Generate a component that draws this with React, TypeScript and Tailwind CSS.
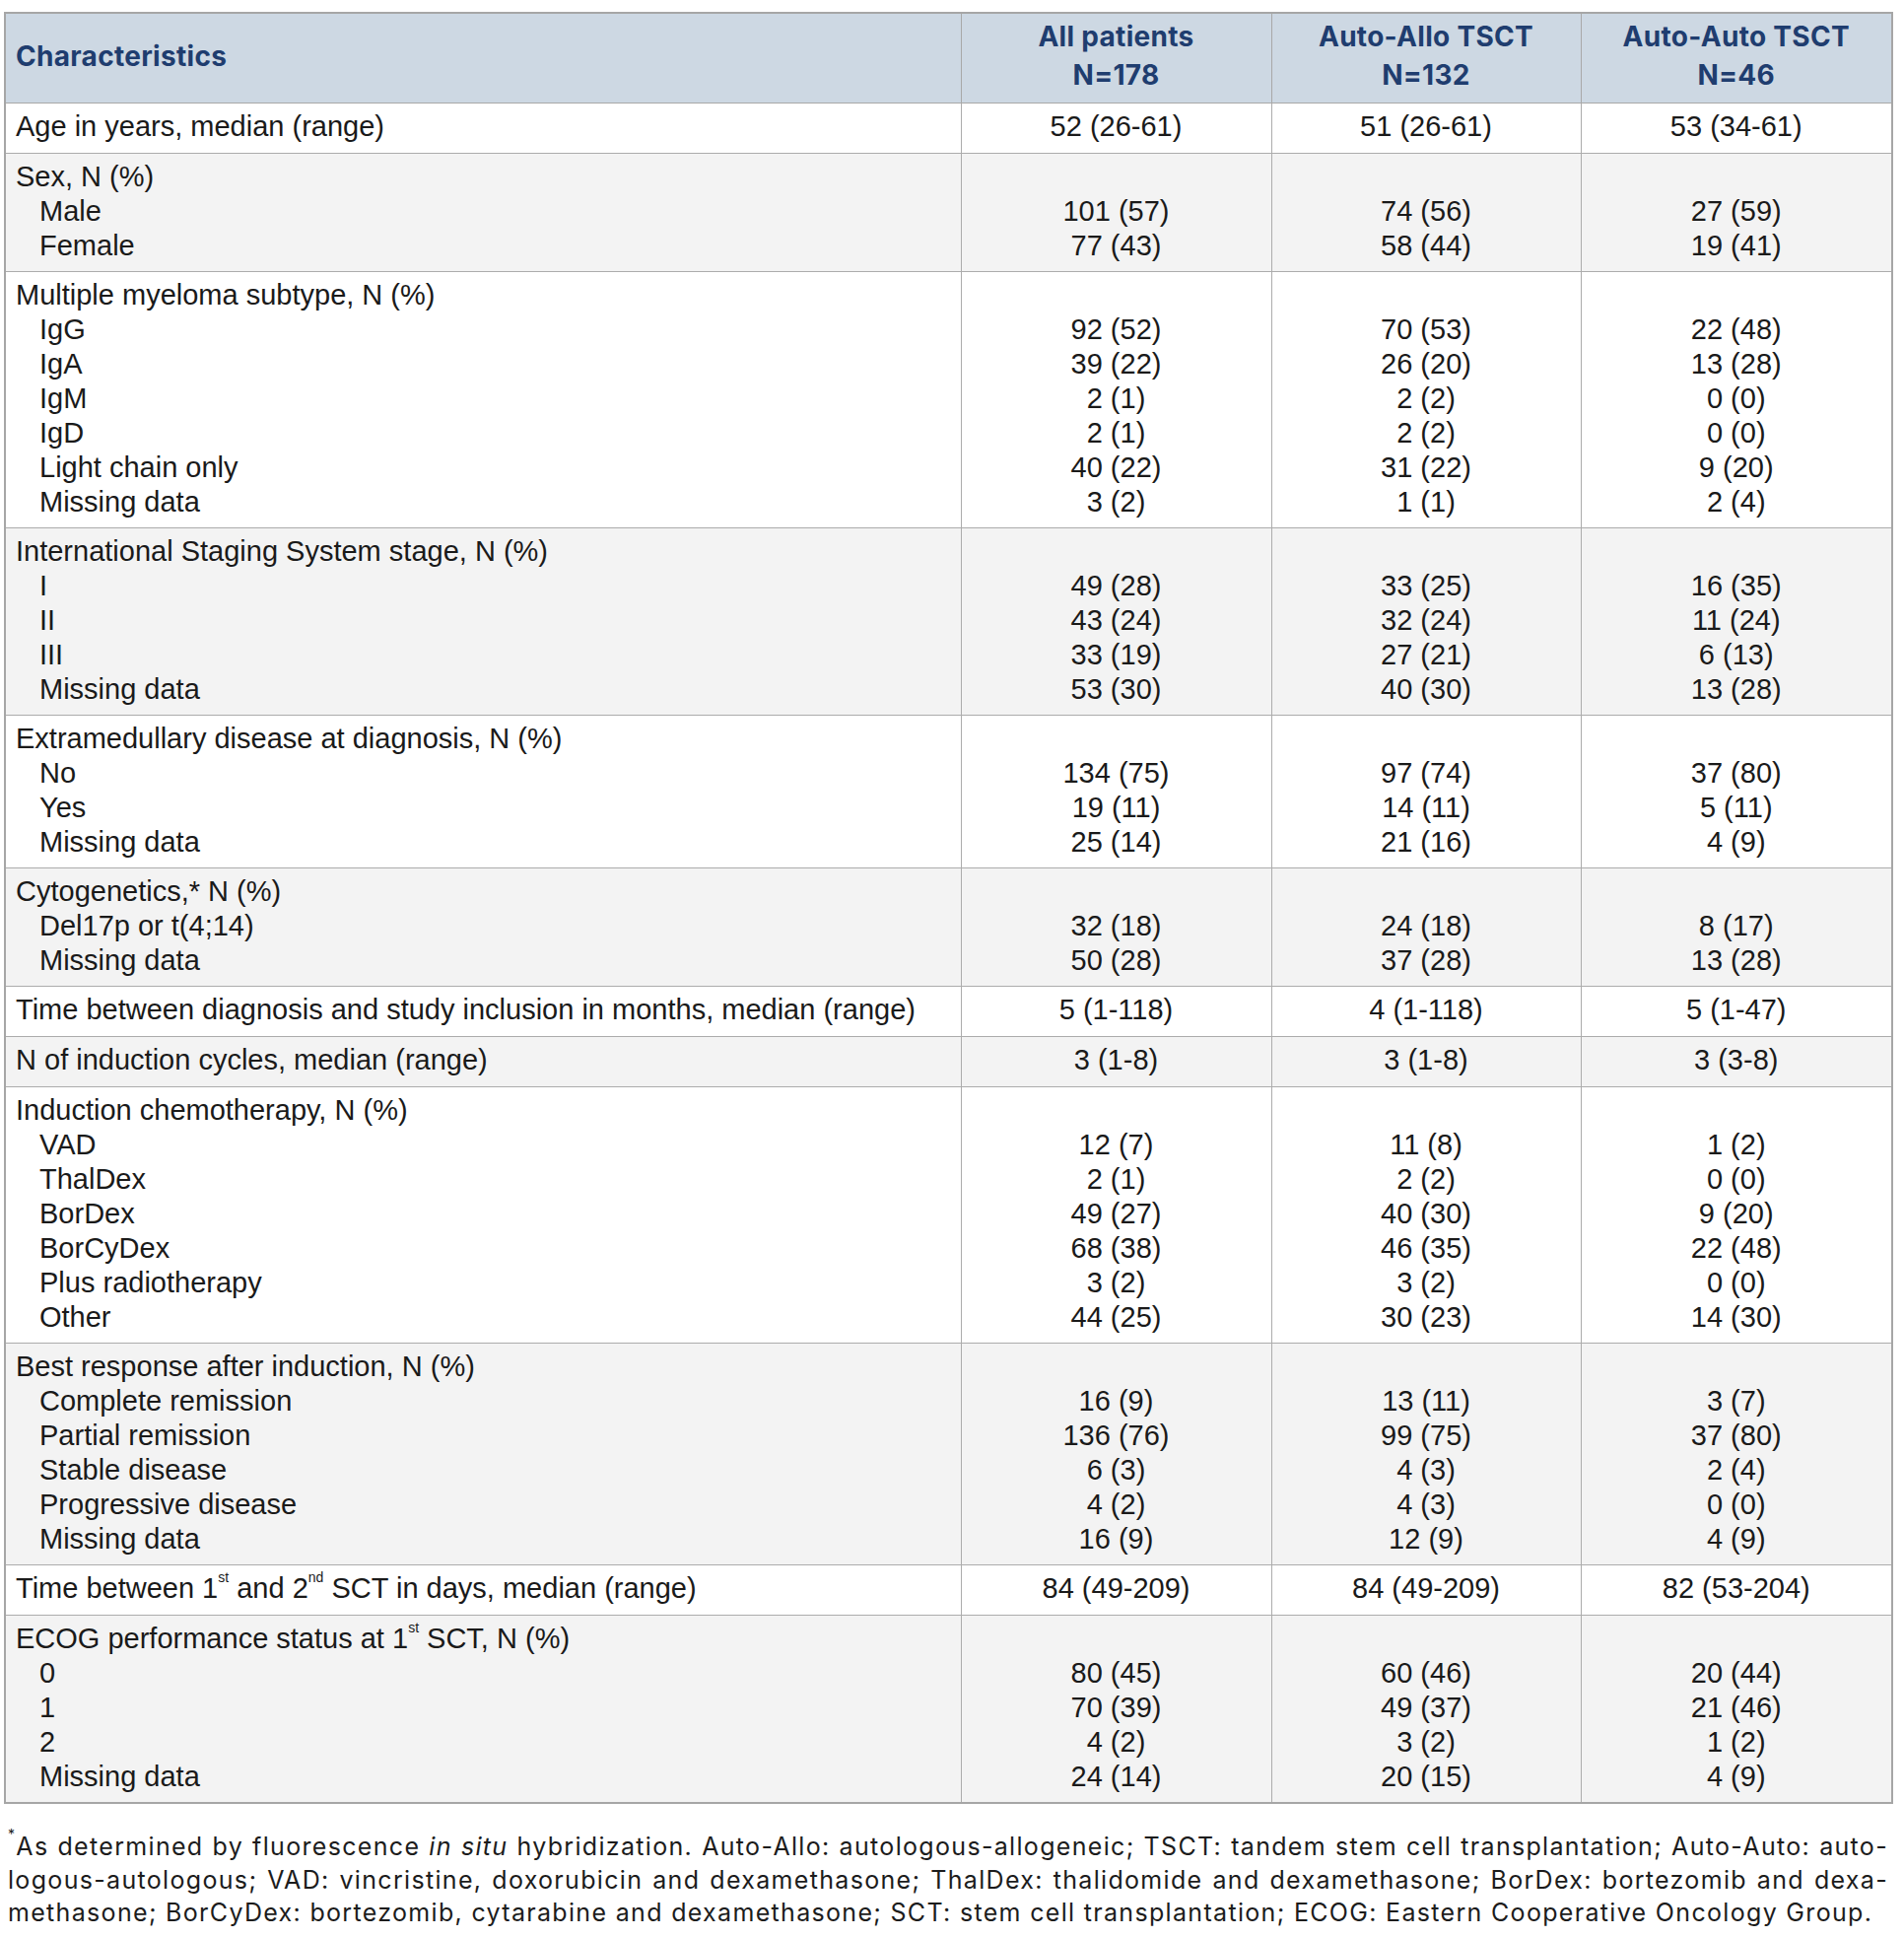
import React from "react";

type Item = [string, string, string, string];
type Row = { label: React.ReactNode; vals?: [string, string, string]; items?: Item[] };

const sup = "text-[14px] align-[9px]";

const rows: Row[] = [
  { label: "Age in years, median (range)", vals: ["52 (26-61)", "51 (26-61)", "53 (34-61)"] },
  {
    label: "Sex, N (%)",
    items: [
      ["Male", "101 (57)", "74 (56)", "27 (59)"],
      ["Female", "77 (43)", "58 (44)", "19 (41)"],
    ],
  },
  {
    label: "Multiple myeloma subtype, N (%)",
    items: [
      ["IgG", "92 (52)", "70 (53)", "22 (48)"],
      ["IgA", "39 (22)", "26 (20)", "13 (28)"],
      ["IgM", "2 (1)", "2 (2)", "0 (0)"],
      ["IgD", "2 (1)", "2 (2)", "0 (0)"],
      ["Light chain only", "40 (22)", "31 (22)", "9 (20)"],
      ["Missing data", "3 (2)", "1 (1)", "2 (4)"],
    ],
  },
  {
    label: "International Staging System stage, N (%)",
    items: [
      ["I", "49 (28)", "33 (25)", "16 (35)"],
      ["II", "43 (24)", "32 (24)", "11 (24)"],
      ["III", "33 (19)", "27 (21)", "6 (13)"],
      ["Missing data", "53 (30)", "40 (30)", "13 (28)"],
    ],
  },
  {
    label: "Extramedullary disease at diagnosis, N (%)",
    items: [
      ["No", "134 (75)", "97 (74)", "37 (80)"],
      ["Yes", "19 (11)", "14 (11)", "5 (11)"],
      ["Missing data", "25 (14)", "21 (16)", "4 (9)"],
    ],
  },
  {
    label: "Cytogenetics,* N (%)",
    items: [
      ["Del17p or t(4;14)", "32 (18)", "24 (18)", "8 (17)"],
      ["Missing data", "50 (28)", "37 (28)", "13 (28)"],
    ],
  },
  {
    label: "Time between diagnosis and study inclusion in months, median (range)",
    vals: ["5 (1-118)", "4 (1-118)", "5 (1-47)"],
  },
  { label: "N of induction cycles, median (range)", vals: ["3 (1-8)", "3 (1-8)", "3 (3-8)"] },
  {
    label: "Induction chemotherapy, N (%)",
    items: [
      ["VAD", "12 (7)", "11 (8)", "1 (2)"],
      ["ThalDex", "2 (1)", "2 (2)", "0 (0)"],
      ["BorDex", "49 (27)", "40 (30)", "9 (20)"],
      ["BorCyDex", "68 (38)", "46 (35)", "22 (48)"],
      ["Plus radiotherapy", "3 (2)", "3 (2)", "0 (0)"],
      ["Other", "44 (25)", "30 (23)", "14 (30)"],
    ],
  },
  {
    label: "Best response after induction, N (%)",
    items: [
      ["Complete remission", "16 (9)", "13 (11)", "3 (7)"],
      ["Partial remission", "136 (76)", "99 (75)", "37 (80)"],
      ["Stable disease", "6 (3)", "4 (3)", "2 (4)"],
      ["Progressive disease", "4 (2)", "4 (3)", "0 (0)"],
      ["Missing data", "16 (9)", "12 (9)", "4 (9)"],
    ],
  },
  {
    label: (
      <>
        Time between 1<sup className={sup}>st</sup> and 2<sup className={sup}>nd</sup> SCT in days, median (range)
      </>
    ),
    vals: ["84 (49-209)", "84 (49-209)", "82 (53-204)"],
  },
  {
    label: (
      <>
        ECOG performance status at 1<sup className={sup}>st</sup> SCT, N (%)
      </>
    ),
    items: [
      ["0", "80 (45)", "60 (46)", "20 (44)"],
      ["1", "70 (39)", "49 (37)", "21 (46)"],
      ["2", "4 (2)", "3 (2)", "1 (2)"],
      ["Missing data", "24 (14)", "20 (15)", "4 (9)"],
    ],
  },
];

const headCell = "border border-[#a8a8a8] px-[10px] pt-[4px] pb-[8px] align-middle";

export default function App() {
  return (
    <div className="bg-white min-h-screen pt-[12px] pl-[4px] text-[#1a1a1a]">
      <table
        className="table-fixed border-collapse border-2 border-[#a6a6a6] w-[1915px]"
        style={{ fontFamily: '"Liberation Sans", Arial, sans-serif' }}
      >
        <colgroup>
          <col className="w-[970px]" />
          <col className="w-[315px]" />
          <col className="w-[314px]" />
          <col className="w-[316px]" />
        </colgroup>
        <thead>
          <tr
            className="bg-[#cdd8e3] text-[#1f3d6f] font-bold text-[28px] leading-[39px] tracking-[0.3px]"
            style={{ fontFamily: 'Inter, "Open Sans", sans-serif' }}
          >
            <th className={`${headCell} text-left`}>Characteristics</th>
            <th className={`${headCell} text-center`}>
              All patients
              <br />
              N=178
            </th>
            <th className={`${headCell} text-center`}>
              Auto-Allo TSCT
              <br />
              N=132
            </th>
            <th className={`${headCell} text-center`}>
              Auto-Auto TSCT
              <br />
              N=46
            </th>
          </tr>
        </thead>
        <tbody className="text-[29px] leading-[35px]">
          {rows.map((r, i) => {
            const cell = `border border-[#acacac] px-[10px] pt-[6px] align-top ${r.vals ? "pb-[9px]" : "pb-[8px]"}`;
            return (
              <tr key={i} className={i % 2 === 0 ? "bg-white" : "bg-[#f3f3f3]"}>
                <td className={`${cell} text-left`}>
                  <div className="whitespace-nowrap">{r.label}</div>
                  {r.items?.map((it) => (
                    <div key={it[0]} className="pl-[24px] whitespace-nowrap">
                      {it[0]}
                    </div>
                  ))}
                </td>
                {[1, 2, 3].map((c) => (
                  <td key={c} className={`${cell} text-center`}>
                    {r.vals ? (
                      <div>{r.vals[c - 1]}</div>
                    ) : (
                      <>
                        <div>&nbsp;</div>
                        {r.items?.map((it) => (
                          <div key={it[0]}>{it[c]}</div>
                        ))}
                      </>
                    )}
                  </td>
                ))}
              </tr>
            );
          })}
        </tbody>
      </table>

      <div
        className="mt-[27px] pl-[4px] w-[1912px] text-[25px] leading-[33.5px] tracking-[1.32px] text-[#1c1c1c]"
        style={{ fontFamily: 'Inter, "Open Sans", sans-serif' }}
      >
        <p className="text-justify [text-align-last:justify]">
          <sup className="text-[14px] align-[9px]">*</sup>As determined by fluorescence <i>in situ</i> hybridization.
          Auto-Allo: autologous-allogeneic; TSCT: tandem stem cell transplantation; Auto-Auto: auto-
        </p>
        <p className="text-justify [text-align-last:justify]">
          logous-autologous; VAD: vincristine, doxorubicin and dexamethasone; ThalDex: thalidomide and dexamethasone;
          BorDex: bortezomib and dexa-
        </p>
        <p>
          methasone; BorCyDex: bortezomib, cytarabine and dexamethasone; SCT: stem cell transplantation; ECOG: Eastern
          Cooperative Oncology Group.
        </p>
      </div>
    </div>
  );
}
